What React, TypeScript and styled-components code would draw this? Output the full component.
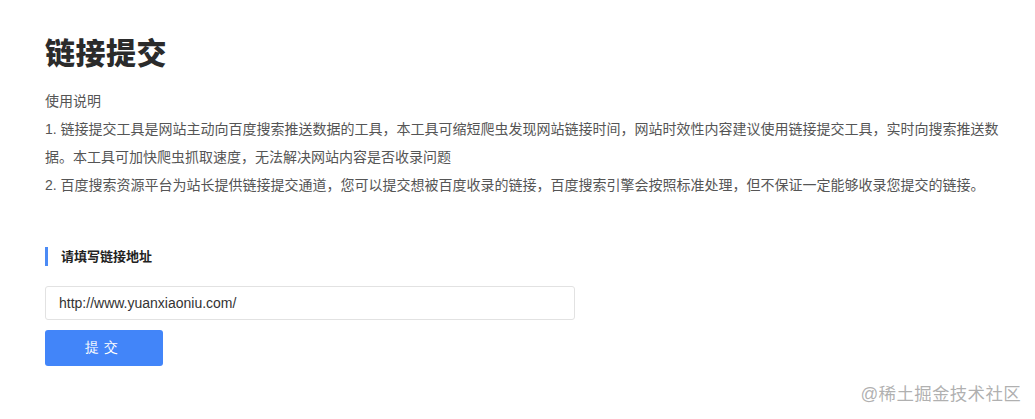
import { useState } from 'react'
import styled, { createGlobalStyle } from 'styled-components'

const GlobalStyle = createGlobalStyle`
  html, body {
    margin: 0;
    padding: 0;
    background: #fff;
  }
  body {
    font-family: Arial, "Liberation Sans", "Noto Sans CJK SC", sans-serif;
    color: #333;
  }
`

const Page = styled.div`
  position: relative;
  width: 1035px;
  height: 419px;
  box-sizing: border-box;
  padding: 32px 30px 0 45px;
  overflow: hidden;
`

const Title = styled.h1`
  margin: 0;
  font-size: 30px;
  line-height: 44px;
  font-weight: 900;
  color: #2b2b2b;
  letter-spacing: 0.5px;
`

const Intro = styled.div`
  margin-top: 11px;
  font-size: 14px;
  line-height: 28px;
  color: #555;
`

const Para = styled.p`
  margin: 0;
`

const Section = styled.div`
  margin-top: 48px;
  display: flex;
  flex-direction: column;
  align-items: flex-start;
`

const SectionTitle = styled.div`
  border-left: 3px solid #4c8bf5;
  padding-left: 13px;
  font-size: 13px;
  line-height: 19px;
  font-weight: bold;
  color: #222;
`

const UrlInput = styled.input`
  margin-top: 20px;
  box-sizing: border-box;
  width: 530px;
  height: 34px;
  padding: 0 13px;
  border: 1px solid #e2e2e2;
  border-radius: 3px;
  font-family: Arial, "Liberation Sans", sans-serif;
  font-size: 14px;
  color: #333;
  outline: none;
`

const SubmitButton = styled.button`
  margin-top: 10px;
  width: 118px;
  height: 36px;
  border: none;
  border-radius: 3px;
  background: #4285f9;
  color: #fff;
  font-size: 14px;
  letter-spacing: 5px;
  padding-left: 5px;
  cursor: pointer;
`

const Watermark = styled.div`
  position: absolute;
  right: 14px;
  bottom: 14px;
  font-size: 17.5px;
  color: rgba(150, 150, 150, 0.75);
  letter-spacing: 0.3px;
`

export default function App() {
  const [url, setUrl] = useState('http://www.yuanxiaoniu.com/')

  return (
    <Page>
      <GlobalStyle />
      <Title>链接提交</Title>
      <Intro>
        <Para>使用说明</Para>
        <Para>1. 链接提交工具是网站主动向百度搜索推送数据的工具，本工具可缩短爬虫发现网站链接时间，网站时效性内容建议使用链接提交工具，实时向搜索推送数据。本工具可加快爬虫抓取速度，无法解决网站内容是否收录问题</Para>
        <Para>2. 百度搜索资源平台为站长提供链接提交通道，您可以提交想被百度收录的链接，百度搜索引擎会按照标准处理，但不保证一定能够收录您提交的链接。</Para>
      </Intro>
      <Section>
        <SectionTitle>请填写链接地址</SectionTitle>
        <UrlInput value={url} onChange={e => setUrl(e.target.value)} />
        <SubmitButton>提交</SubmitButton>
      </Section>
      <Watermark>@稀土掘金技术社区</Watermark>
    </Page>
  )
}
